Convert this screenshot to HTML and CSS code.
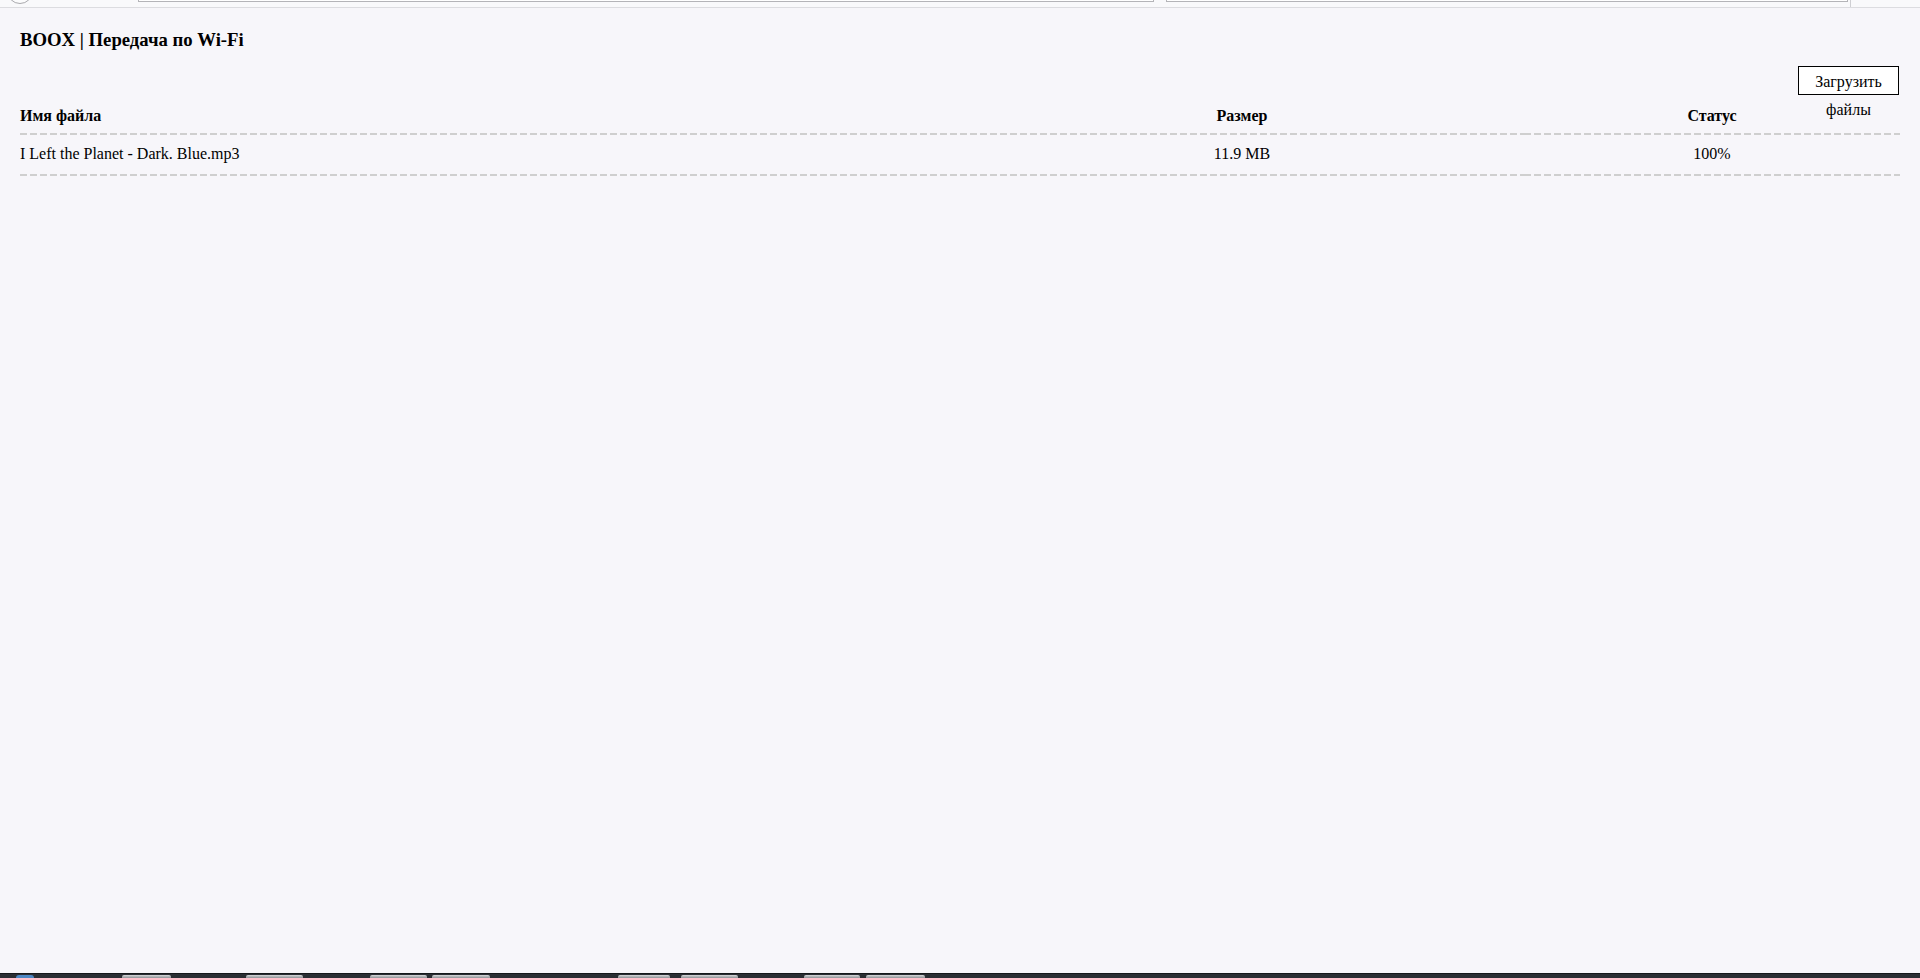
FILE: index.html
```html
<!DOCTYPE html>
<html lang="ru">
<head>
  <meta charset="UTF-8">
  <title>BOOX | Передача по Wi-Fi</title>
  <link rel="stylesheet" href="styles.css">
</head>
<body>

<!-- край окна браузера сверху -->
<div class="chrome-top">
  <span class="nav-circle"></span>
  <span class="addr-box addr-url"></span>
  <span class="addr-box addr-search"></span>
  <span class="chrome-tick"></span>
</div>

<main class="page">
  <h1 class="title">BOOX | Передача по Wi-Fi</h1>

  <div class="toolbar">
    <label class="upload-btn">Загрузить файлы<input type="file" class="file-input" multiple></label>
  </div>

  <table class="files">
    <thead>
      <tr>
        <th class="col-name">Имя файла</th>
        <th class="col-size">Размер</th>
        <th class="col-status">Статус</th>
      </tr>
    </thead>
    <tbody id="fileBody">
      <tr>
        <td class="col-name">I Left the Planet - Dark. Blue.mp3</td>
        <td class="col-size">11.9 MB</td>
        <td class="col-status">100%</td>
      </tr>
    </tbody>
  </table>
</main>

<!-- панель задач внизу -->
<div class="taskbar">
  <span class="task-start"></span>
  <span class="task-btn tb1"></span>
  <span class="task-btn tb2"></span>
  <span class="task-btn tb3"></span>
  <span class="task-btn tb4"></span>
  <span class="task-btn tb5"></span>
  <span class="task-btn tb6"></span>
  <span class="task-btn tb7"></span>
  <span class="task-btn tb8"></span>
</div>

</body>
</html>
```

FILE: styles.css
```css
html, body {
  height: 100%;
}

body {
  margin: 0;
  display: flex;
  flex-direction: column;
  background: #f7f6fa;
  color: #000;
  font-family: "Liberation Serif", "Times New Roman", serif;
  font-size: 16px;
}

/* верхняя полоска браузера */
.chrome-top {
  flex: none;
  height: 7px;
  display: flex;
  align-items: flex-end;
  overflow: hidden;
  background: #f9f9fb;
  border-bottom: 1px solid #dcdce0;
}

.nav-circle {
  width: 24px;
  height: 24px;
  margin-left: 7px;
  margin-bottom: 3px;
  border: 1px solid #a9a9ad;
  border-radius: 50%;
  background: #fcfcfd;
}

.addr-box {
  height: 10px;
  margin-bottom: 5px;
  border: 1px solid #b4b4b8;
  border-top: none;
  background: #fff;
}

.addr-url {
  width: 1014px;
  margin-left: 105px;
}

.addr-search {
  width: 680px;
  margin-left: 12px;
}

.chrome-tick {
  width: 1px;
  height: 7px;
  margin-left: 2px;
  background: #cfcfd3;
}

/* страница */
.page {
  flex: 1;
  padding: 0 20px;
}

.title {
  font-size: 18.72px;
  line-height: 22px;
  font-weight: bold;
  margin: 21px 0 15px;
}

.toolbar {
  display: flex;
  justify-content: flex-end;
  padding-right: 1px;
}

.upload-btn {
  display: block;
  box-sizing: border-box;
  width: 101px;
  height: 29px;
  padding-top: 1px;
  border: 1px solid #000;
  background: #fff;
  text-align: center;
  line-height: 28px;
  cursor: pointer;
}

.file-input {
  display: none;
}

.files {
  width: 100%;
  border-collapse: collapse;
}

/* пунктир снизу: 7px штрих, 3px пробел */
.files th,
.files td {
  line-height: 18.4px;
  background: repeating-linear-gradient(to right, #cfcfcf 0 7px, transparent 7px 10px) left bottom / 100% 2px no-repeat;
}

.files th {
  font-weight: bold;
  padding: 12px 0 10px;
}

.files td {
  padding: 10px 0 12px;
}

.col-name {
  width: 50%;
  text-align: left;
}

.col-size {
  width: 30%;
  text-align: center;
}

.col-status {
  width: 20%;
  text-align: center;
}

/* панель задач */
.taskbar {
  flex: none;
  height: 4px;
  position: relative;
  background: #2a2e33;
  border-top: 1px solid #15181b;
}

.task-start {
  position: absolute;
  left: 16px;
  top: 1px;
  width: 18px;
  height: 3px;
  border-radius: 8px 8px 0 0;
  background: #4d87c4;
}

.task-btn {
  position: absolute;
  top: 1px;
  height: 3px;
  background: linear-gradient(#d8d9db, #8e9296);
  border-radius: 2px 2px 0 0;
}

.tb1 { left: 122px; width: 49px; }
.tb2 { left: 246px; width: 57px; }
.tb3 { left: 370px; width: 57px; }
.tb4 { left: 432px; width: 58px; }
.tb5 { left: 618px; width: 52px; }
.tb6 { left: 681px; width: 57px; }
.tb7 { left: 804px; width: 56px; }
.tb8 { left: 866px; width: 59px; }
```
